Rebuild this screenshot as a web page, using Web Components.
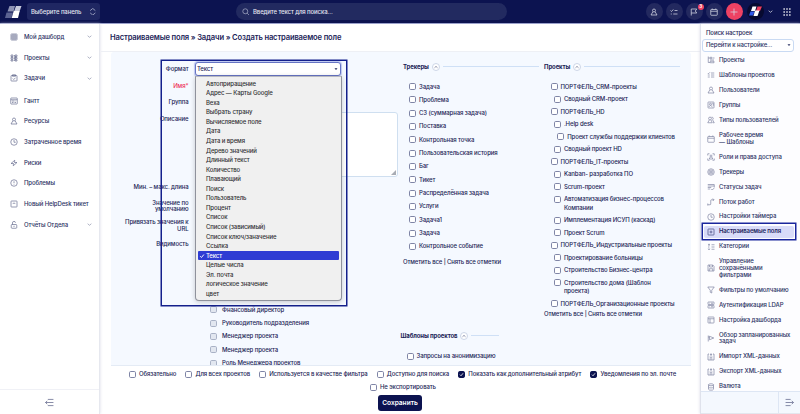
<!DOCTYPE html>
<html lang="ru">
<head>
<meta charset="utf-8">
<title>Создать настраиваемое поле</title>
<style>
html,body{margin:0;padding:0;width:800px;height:414px;overflow:hidden;background:#fff}
body{font:500 6px/8px Inter,"Noto Sans",sans-serif;letter-spacing:-.105px;color:#1c2556}
</style>
</head>
<body>
<app-shell></app-shell>
<script>
const ICONS = {
  dash:'<rect x="2" y="2" width="12" height="12" rx="1"/><path d="M6 2v12M10 2v12M2 6h12M2 10h12"/>',
  tree:'<path d="M2 2h4v3H2zM2 7h4v3H2zM2 11.500h4v2.500H2zM8 3.500h2v9h-2M8 8h2M10 2h4v3h-4zM10 7h4v3h-4zM10 11.500h4v2.500h-4z"/>',
  task:'<rect x="2" y="3" width="12" height="11" rx="1"/><path d="M5 1.500h6v3H5zM5.500 9l2 2 3.500-3.500"/>',
  gantt:'<rect x="1.500" y="2" width="13" height="12" rx="1"/><path d="M1.500 5.500h13M4 8h5M4 11h3M9 11h3M11 8h1"/>',
  user:'<circle cx="8" cy="5" r="3"/><path d="M5.800 7.500L2 14h12L10.200 7.500"/>',
  clock:'<circle cx="8" cy="8" r="6.500"/><path d="M8 4v4.500h3.500"/>',
  risk:'<path d="M9.500 2.500L2 9h5l-.5 4.500L14 7H9z"/>',
  warn:'<circle cx="8" cy="8" r="6.500"/><path d="M8 4.500v4M8 10.500v1"/>',
  ticket:'<rect x="2" y="2" width="12" height="12" rx="1"/><path d="M5.500 8L8 5.500 10.500 8"/>',
  lock:'<rect x="2.500" y="7" width="11" height="7.500" rx="1.500"/><path d="M5 7V4a3 3 0 0 1 6-.5M8 9.500v2.500"/>',
  down:'<path d="M2 5.500l6 5 6-5"/>',
  up:'<path d="M2 11L8 5.500 14 11"/>',
  caret:'<path d="M2 5h12L8 12z" fill="currentColor" stroke="none"/>',
  updown:'<path d="M2.500 5.500L8 1l5.500 4.500M2.500 10.500L8 15l5.500-4.500"/>',
  search:'<circle cx="7" cy="7" r="5.300"/><path d="M11 11l4 4"/>',
  list:'<path d="M1.500 4l1.500 1.500L6 2.500M8 4h6.500M1.500 8h4M8 8h6.500M1.500 12h4M8 12h6.500"/>',
  checks:'<path d="M1 5l2 2 3.500-4M9 5h6M1.500 12H3.500M6.500 12H15"/>',
  flag:'<path d="M2.500 15V2h11l-3 4 3 4h-11"/>',
  cal:'<rect x="1.500" y="3" width="13" height="11.500" rx="1"/><path d="M1.500 6.500h13M4.500 1v2M11.500 1v2"/>',
  plus:'<path d="M8 1v14M1 8h14"/>',
  grid:'<path d="M1 2h2.600M6.700 2h2.600M12.400 2h2.600M1 8h2.600M6.700 8h2.600M12.400 8h2.600M1 14h2.600M6.700 14h2.600M12.400 14h2.600" stroke-width="2.600"/>',
  ptree:'<path d="M2.500 1v12H6M2.500 4H6M6.500 2.500h3v3h-3zM6.500 10.500H14v3H6.500zM11 4h4M6 8h8"/>',
  groups:'<rect x="2" y="2" width="12" height="12" rx="1"/><circle cx="7" cy="6.500" r="2"/><path d="M3.500 12l3.500-3.500L11 12M10.500 4.500h2v5"/>',
  users:'<circle cx="6" cy="5" r="2.800"/><path d="M4.500 8L1.500 13.500h9L8 8M9 2.500a2.700 2.700 0 0 1 2 5l3.500 6H12"/>',
  roles:'<path d="M1.500 5V1.500H5M11 1.500h3.500V5M14.500 11v3.500H11M5 14.500H1.500V11"/><circle cx="8" cy="6" r="2"/><path d="M6.500 8L4.500 12h7L9.500 8"/>',
  target:'<circle cx="8" cy="8" r="6.500"/><circle cx="8" cy="8" r="4"/><circle cx="8" cy="8" r="1.500"/>',
  status:'<path d="M1.500 3h13v6M1.500 6h13M1.500 9h7M1.500 12h5M8.500 12l2 2 4-4"/>',
  flow:'<path d="M1.500 13.500H6a1.500 1.500 0 0 0 1.500-1.500V5A1.500 1.500 0 0 1 9 3.500h5M11.500 1L14 3.500 11.500 6M1.500 11v4"/>',
  boxplus:'<rect x="2" y="2" width="12" height="12" rx="1"/><path d="M8 5v6M5 8h6"/>',
  cats:'<path d="M2 3.500h4M4 1.500v4M9 3.500h6M2 8h3M9 8h6M2.500 11l3 3M5.500 11l-3 3M9 12.500h6"/>',
  save:'<path d="M2 2h9.500L14 4.500V14H2zM5 2v4h6V2M4.500 14V9.500h7V14"/>',
  funnel:'<path d="M1.500 2h13L9.500 8.500V14l-3-1.500v-4z"/>',
  server:'<rect x="2" y="2" width="12" height="5" rx=".5"/><rect x="2" y="9" width="12" height="5" rx=".5"/><path d="M4.500 4.500h1M8 4.500h4M4.500 11.500h1M8 11.500h4"/>',
  layout:'<rect x="2" y="2" width="12" height="12" rx="1"/><path d="M2 5.500h12M6 5.500V14"/>',
  play:'<path d="M2.500 15V3M5 4.500l8.500 3.500L5 11.500zM2.500 6H5"/>',
  xml:'<path d="M4 2H2v12h12V2h-2M8 1.500v6M6 4l2-2.500L10 4M5 8l3 2 3-2M5 12h6"/>',
  coins:'<ellipse cx="8" cy="3.500" rx="5" ry="2"/><path d="M3 3.500v9c0 2.500 10 2.500 10 0v-9M3 8c0 2.500 10 2.500 10 0"/>',
  toleft:'<path d="M5 2.500h10M1 8h14M5 13.500h10M4 5L1 8l3 3"/>',
  toright:'<path d="M1 2.500h9M1 8h14M1 13.500h9M12 5l3 3-3 3"/>',
  tick:'<path d="M3 8.500l3.500 3.500L13 4"/>'
};
function define(name, render){
  customElements.define(name, class extends HTMLElement{
    connectedCallback(){
      if(!this.shadowRoot) this.attachShadow({mode:'open'}).innerHTML = render(this);
    }
  });
}
define('ui-icon', e => `<style>:host{display:block;flex:none;width:${e.getAttribute('s')||8}px;height:${e.getAttribute('s')||8}px}
svg{display:block;width:100%;height:100%;fill:none;stroke:currentColor;stroke-width:${e.getAttribute('w')||1.3};stroke-linejoin:round}</style>
<svg viewBox="0 0 16 16">${ICONS[e.getAttribute('n')]}</svg>`);

define('brand-mark', e => `<style>:host{display:block;flex:none}svg{display:block}</style>
<svg width="17" height="12" viewBox="0 0 17 12"><path d="M4.500 0H10L8.500 5.500H2.500z" fill="#8e93b4"/><path d="M11 0h5.500L14.500 5.500H9z" fill="#c8cbdc"/><path d="M1.500 6.500H8L6.500 12H0z" fill="#5b6292"/><path d="M8.700 5h6L13 12H6.700z" fill="#fff"/></svg>`);

define('nav-item', e => `<style>:host{display:flex;align-items:center;height:20.700px;padding:0 7px 0 10px;box-sizing:border-box;color:#2b3263}
ui-icon{color:#5d6388}span{margin-left:6px;flex:1;white-space:nowrap}.c{color:#8c91ab}</style>
<ui-icon n="${e.getAttribute('icon')}"></ui-icon><span><slot></slot></span>${e.hasAttribute('more')?'<ui-icon class="c" n="down" s="5" w="2.2"></ui-icon>':''}`);

define('round-button', e => `<style>:host{display:flex;position:relative;flex:none;width:17px;height:17px;border-radius:50%;align-items:center;justify-content:center;background:${e.getAttribute('bg')||'#23295f'};color:#d6d8e6}
b{position:absolute;right:-1px;top:1px;width:6px;height:6px;border-radius:50%;background:#ee4263;color:#fff;font:700 4.500px/6px Inter,sans-serif;text-align:center}</style>
<ui-icon n="${e.getAttribute('icon')}" s="8" w="1.5"></ui-icon>${e.hasAttribute('badge')?`<b>${e.getAttribute('badge')}</b>`:''}`);

define('app-header', () => `<style>:host{display:flex;flex:none;height:23px;align-items:center;background:#0c1350;border-bottom:1px solid #9aa0cb;box-sizing:content-box;color:#fff}
brand-mark{margin-left:5px}.panel{margin-left:5px;width:73px;height:17px;border-radius:3px;background:#1f2762;display:flex;align-items:center;justify-content:space-between;padding:0 4px;box-sizing:border-box;color:#e4e6f1;white-space:nowrap}
.panel ui-icon{color:#a9aeca}.search{margin-left:136px;width:271px;height:17px;border-radius:9px;background:#222a60;display:flex;align-items:center;padding-left:6px;box-sizing:border-box;gap:3.500px;color:#e4e6f1;white-space:nowrap}
.search ui-icon{color:#c2c5da}.acts{display:flex;align-items:center;gap:3.100px;margin-left:138.500px}.av{margin-left:1.500px;display:block}.dd{margin-left:.5px}.gr{margin-left:7px}</style>
<brand-mark></brand-mark><div class="panel"><span>Выберите панель</span><ui-icon n="updown" s="7.5" w="1.8"></ui-icon></div>
<div class="search"><ui-icon n="search" s="7.5"></ui-icon><span>Введите текст для поиска...</span></div>
<div class="acts"><round-button icon="user"></round-button><round-button icon="checks"></round-button><round-button icon="flag" badge="3"></round-button><round-button icon="cal"></round-button><round-button icon="plus" bg="#ee4263"></round-button>
<svg class="av" width="17" height="17" viewBox="0 0 17 17"><circle cx="8.500" cy="8.500" r="8.500" fill="#070a30"/><path d="M5.500 3.500h4L8 8H4z" fill="#fff"/><path d="M10.500 3.500h4.500L13 8H9z" fill="#ee3f5f"/><path d="M3.500 8.500H7.500L6 12.500H2z" fill="#3159e8"/><path d="M8 7.500h4.500L10.500 13H6.500z" fill="#fff"/></svg>
<ui-icon class="dd" n="down" s="5" w="2"></ui-icon><ui-icon class="gr" n="grid" s="8"></ui-icon></div>`);

define('left-nav', () => `<style>:host{display:flex;flex-direction:column;width:100px;min-height:0;box-sizing:border-box;background:#fff;border-right:1px solid #e6e8ef;box-shadow:0 0 3px #d9dbe6;padding-top:2.500px}
.g{margin-bottom:1.800px}footer{margin-top:auto;height:24px;border-top:1px solid #f0f1f6;display:flex;align-items:center;justify-content:center;color:#5d6388}</style>
<nav class="g"><nav-item icon="dash" more>Мой дашборд</nav-item><nav-item icon="tree" more>Проекты</nav-item><nav-item icon="task" more>Задачи</nav-item></nav>
<nav><nav-item icon="gantt">Гантт</nav-item><nav-item icon="user">Ресурсы</nav-item><nav-item icon="clock">Затраченное время</nav-item><nav-item icon="risk">Риски</nav-item><nav-item icon="warn">Проблемы</nav-item><nav-item icon="ticket">Новый HelpDesk тикет</nav-item><nav-item icon="lock" more>Отчёты Отдела</nav-item></nav>
<footer><ui-icon n="toleft" s="9"></ui-icon></footer>`);

define('setting-item', e => `<style>:host{display:flex;align-items:center;padding:4.150px 0 4.150px 6px;position:relative;color:#2b3263}
ui-icon{color:#777c9c;margin:-1px 0}span{margin-left:4px;line-height:6.700px;white-space:nowrap}
:host([active]) ui-icon{color:#343c74}:host([active]) span{font-weight:600;color:#1d2560;letter-spacing:-.15px}:host([active]) .bg{background:#d9dcf9;border-radius:2px;position:absolute;inset:1.500px 6px 1.500px 3px}
:host([active]) .fr{position:absolute;inset:-1px 4.500px -1px .5px;border:1px solid #1a269c;box-shadow:0 0 0 .5px #1a269c;box-sizing:border-box}ui-icon,span{position:relative;z-index:1}</style>
<i class="bg"></i><i class="fr"></i><ui-icon n="${e.getAttribute('icon')}"></ui-icon><span><slot></slot></span>`);

define('settings-panel', () => `<style>:host{display:flex;flex-direction:column;width:100px;min-height:0;box-sizing:border-box;border-left:1px solid #dfe2ec;box-shadow:0 0 3px #d9dbe6;background:#fdfdff}
label{padding:5px 0 0 5px;height:9.500px}.sel{flex:none;margin:0 6px 0 1px;height:13px;box-sizing:border-box;border:1px solid #c9daf3;border-radius:3px;display:flex;align-items:center;justify-content:space-between;padding:0 2px 0 3px;background:#fff;color:#2b3263}
.list{flex:1;min-height:0;overflow:hidden;padding-top:1.300px}
footer{flex:none;height:23px;border-top:1px solid #dde6f4;border-bottom:1px solid #e3e6ee;box-sizing:border-box;background:#f4f8fe;display:flex;justify-content:flex-end}footer div{width:21px;border-left:1px solid #dde6f4;display:flex;align-items:center;justify-content:center;color:#5d6388}</style>
<label>Поиск настроек</label><div class="sel"><span>Перейти к настройке...</span><ui-icon n="caret" s="4"></ui-icon></div>
<div class="list"><setting-item icon="ptree">Проекты</setting-item><setting-item icon="list">Шаблоны проектов</setting-item><setting-item icon="user">Пользователи</setting-item><setting-item icon="groups">Группы</setting-item><setting-item icon="users">Типы пользователей</setting-item><setting-item icon="cal">Рабочее время<br>— Шаблоны</setting-item><setting-item icon="roles">Роли и права доступа</setting-item><setting-item icon="target">Трекеры</setting-item><setting-item icon="status">Статусы задач</setting-item><setting-item icon="flow">Поток работ</setting-item><setting-item icon="clock">Настройки таймера</setting-item><setting-item icon="boxplus" active>Настраиваемые поля</setting-item><setting-item icon="cats">Категории</setting-item><setting-item icon="save">Управление<br>сохранёнными<br>фильтрами</setting-item><setting-item icon="funnel">Фильтры по умолчанию</setting-item><setting-item icon="server">Аутентификация LDAP</setting-item><setting-item icon="layout">Настройка дашборда</setting-item><setting-item icon="play">Обзор запланированных<br>задач</setting-item><setting-item icon="xml">Импорт XML-данных</setting-item><setting-item icon="xml">Экспорт XML-данных</setting-item><setting-item icon="coins">Валюта</setting-item></div>
<footer><div><ui-icon n="toright" s="9"></ui-icon></div></footer>`);

define('check-item', e => `<style>:host{display:flex;align-items:flex-start;white-space:nowrap}
i{flex:none;width:7px;height:7px;box-sizing:border-box;border:1px solid #7f85a6;border-radius:1.700px;background:#fff;margin-top:.5px;display:flex}
:host([off]) i{background:#e2e7f0;border-color:#a9b2c6}:host([on]) i{background:#0c1350;border-color:#0c1350;color:#fff}span{margin-left:3px;line-height:8.500px}
:host([off]) span{margin-left:5px}</style><i>${e.hasAttribute('on')?'<ui-icon n="tick" s="5" w="2.5"></ui-icon>':''}</i><span><slot></slot></span>`);

define('group-head', () => `<style>:host{display:flex;align-items:center;height:9px;font-weight:700;color:#1a2255;white-space:nowrap}
u{margin-left:3px;width:8px;height:8px;box-sizing:border-box;border:1px solid #cdd6e8;border-radius:50%;display:flex;align-items:center;justify-content:center;background:#fff;color:#444b75}
hr{flex:1;border:0;height:1px;background:#cfe0f6;margin:0 0 0 3px}</style><slot></slot><u><ui-icon n="up" s="4" w="2.4"></ui-icon></u><hr>`);

define('format-menu', () => `<style>:host{display:block;box-sizing:border-box;width:147px;height:225px;background:#f0f0f0;border:1px solid #8f929c;border-top-color:#b9bac1;border-radius:0 0 4px 4px;box-shadow:0 1px 5px #0003;padding:1.600px 2px;color:#303034;font-weight:450}
div{height:9.570px;line-height:9.570px;padding-left:8.500px;white-space:nowrap;position:relative}.on{background:#2e3cd3;color:#fff;font-weight:500;border-radius:1px}.on ui-icon{position:absolute;left:1.500px;top:2px}</style>
${['Автоприращение','Адрес — Карты Google','Веха','Выбрать страну','Вычисляемое поле','Дата','Дата и время','Дерево значений','Длинный текст','Количество','Плавающий','Поиск','Пользователь','Процент','Список','Список (зависимый)','Список ключ/заначение','Ссылка','Текст','Целые числа','Эл. почта','логическое значение','цвет'].map(t=>t==='Текст'?`<div class="on"><ui-icon n="tick" s="6" w="2.500"></ui-icon>${t}</div>`:`<div>${t}</div>`).join('')}`);

define('field-row', e => `<style>:host{display:flex;align-items:${e.hasAttribute('top')?'flex-start':'center'};height:${e.getAttribute('h')}px}
label{width:72px;text-align:right;line-height:6.500px;flex:none;margin:0 6.500px 0 5.500px;white-space:nowrap;${e.hasAttribute('top')?'padding-top:6px;':''}${e.hasAttribute('required')?'color:#ee2f58;':''}}</style><label>${e.getAttribute('label')}</label><slot></slot>`);

define('field-form', () => {
  const tr=['Задача','Проблема','СЗ (суммарная задача)','Поставка','Контрольная точка','Пользовательская история','Баг','Тикет','Распределённая задача','Услуги','Задача1','Задача','Контрольное событие'];
  const pr=[[0,'ПОРТФЕЛЬ_CRM-проекты'],[1,'Сводный CRM-проект'],[0,'ПОРТФЕЛЬ_HD'],[1,'.Help desk'],[2,'Проект службы поддержки клиентов'],[1,'Сводный проект HD'],[0,'ПОРТФЕЛЬ_IT-проекты'],[1,'Kanban- разработка ПО'],[1,'Scrum-проект'],[1,'Автоматизация бизнес-процессов<br>Компании'],[1,'Имплементация ИСУП (каскад)'],[1,'Проект Scrum'],[0,'ПОРТФЕЛЬ_Индустриальные проекты'],[1,'Проектирование больницы'],[1,'Строительство Бизнес-центра'],[1,'Строительство дома (Шаблон<br>проекта)'],[0,'ПОРТФЕЛЬ_Организационные проекты']];
  const roles=['Фнансовый директор','Руководитель подразделения','Менеджер проекта','Менеджер проекта','Роль Менеджера проектов'];
  return `<style>:host{display:grid;grid-template-columns:290px 144px 146px;position:relative;height:314px;margin:0 9px 0 10px;background:#f5f9ff;border-bottom:1px solid #e4ebf5;box-sizing:border-box;overflow:hidden;border-radius:3px 3px 0 0}
.a{padding-top:8.500px}.sel{width:146px;height:13.500px;box-sizing:border-box;border:1px solid #6674c4;border-radius:3px;background:#fff;box-shadow:0 0 1px 1px #bcc6f0;display:flex;align-items:center;justify-content:space-between;padding:0 2px 0 1px}
.ta{width:203px;height:65px;margin-top:1.500px;box-sizing:border-box;border:1px solid #cfdff0;border-radius:3px;background:#fff;display:flex;align-items:flex-end;justify-content:flex-end}.ta svg{margin:1px}
.roles{padding-left:99px;margin-top:51.700px}.roles check-item{height:13.350px}
.b{padding:10px 0 0 2px}.trk{padding:11.500px 0 0 6px}.trk check-item{height:13.330px}.links{line-height:8px;white-space:nowrap;letter-spacing:-.13px}
.c{padding:10px 11px 0 0;margin-left:-1px}.prj{padding:11.500px 0 0 6.500px}.prj check-item{padding-bottom:4px}.l1{margin-left:3.400px}.l2{margin-left:6.700px}
format-menu{position:absolute;left:83.500px;top:24px}.frame{position:absolute;left:50px;top:7.500px;width:185.500px;height:246px;box-sizing:border-box;border:1px solid #14208c;box-shadow:0 0 0 .5px #14208c}.tpl{margin:65.500px 0 0 -2.500px;width:98px}.ask{margin:12px 0 0 3.500px}</style>
<div class="a"><field-row h="17" label="Формат"><div class="sel"><span>Текст</span><ui-icon n="caret" s="4"></ui-icon></div></field-row><field-row h="16.5" label="Имя*" required></field-row><field-row h="16" label="Группа"></field-row><field-row h="70" top label="Описание"><div class="ta"><svg width="5" height="5"><path d="M5 0v5H0z" fill="#a8acb4"/></svg></div></field-row><field-row h="15" label="Мин. – макс. длина"></field-row><field-row h="22" label="Значение по<br>умолчанию"></field-row><field-row h="17" label="Привязать значения к<br>URL"></field-row><field-row h="20" label="Видимость"></field-row>
<div class="roles">${roles.map(t=>`<check-item off>${t}</check-item>`).join('')}</div></div>
<div class="b"><group-head style="width:136px">Трекеры</group-head><div class="trk">${tr.map(t=>`<check-item>${t}</check-item>`).join('')}</div><div class="links" style="margin-top:2px">Отметить все | Снять все отметки</div><group-head class="tpl">Шаблоны проектов</group-head><check-item class="ask">Запросы на анонимизацию</check-item></div>
<div class="c"><group-head>Проекты</group-head><div class="prj">${pr.map(p=>`<check-item class="l${p[0]}">${p[1]}</check-item>`).join('')}</div><div class="links" style="margin-top:-2px">Отметить все | Снять все отметки</div></div>
<i class="frame"></i><format-menu></format-menu>`;
});

define('app-shell', () => `<style>:host{display:flex;flex-direction:column;width:800px;height:414px}
.row{flex:1;min-height:0;display:grid;grid-template-columns:101px 599px 100px;grid-template-rows:minmax(0,1fr)}main{min-width:0;min-height:0}
h1{margin:0;height:27px;border-bottom:1px solid #eef0f5;font-size:7.600px;letter-spacing:-.155px;line-height:27px;font-weight:600;color:#1b2458;padding-left:9px;white-space:nowrap}
.opts{display:flex;padding:4px 0 0 28px;gap:9.200px;height:13px;box-sizing:border-box}.o2{padding-left:269px}
button{display:block;margin:3px 0 0 277px;width:44px;height:16px;border:0;padding:0;border-radius:3px;background:#0c1350;color:#fff;font:600 6.600px/16px Inter,sans-serif}</style>
<app-header></app-header><div class="row"><left-nav></left-nav><main><h1>Настраиваемые поля » Задачи » Создать настраиваемое поле</h1><field-form></field-form>
<div class="opts"><check-item>Обязательно</check-item><check-item>Для всех проектов</check-item><check-item>Используется в качестве фильтра</check-item><check-item>Доступно для поиска</check-item><check-item on>Показать как дополнительный атрибут</check-item><check-item on>Уведомления по эл. почте</check-item></div>
<div class="opts o2"><check-item>Не экспортировать</check-item></div><button>Сохранить</button></main><settings-panel></settings-panel></div>`);
</script>
</body>
</html>
